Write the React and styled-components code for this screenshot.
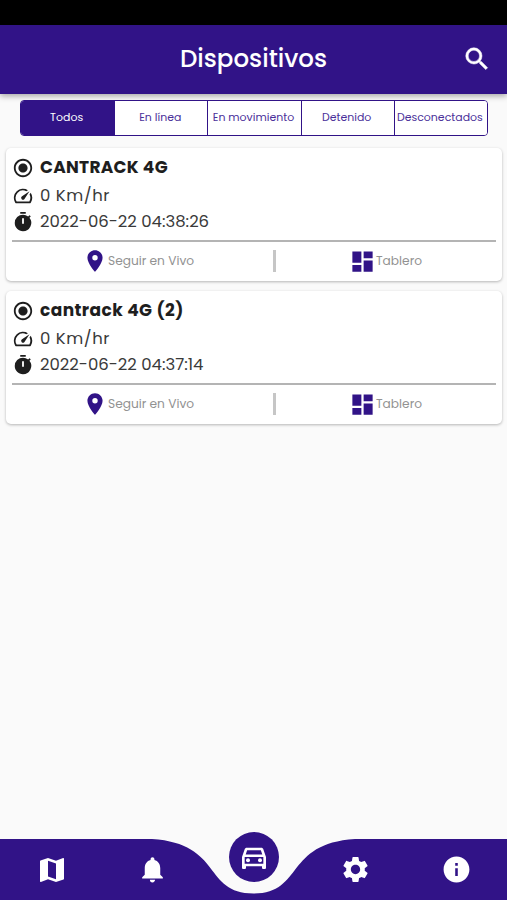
import React, { useState } from 'react';
import styled, { createGlobalStyle } from 'styled-components';
import {
  MdSearch,
  MdRadioButtonChecked,
  MdOutlineSpeed,
  MdTimer,
  MdPlace,
  MdDashboard,
  MdMap,
  MdNotifications,
  MdOutlineDirectionsCar,
  MdSettings,
  MdInfo
} from 'react-icons/md';

const primary = '#311387';

const filters = ['Todos', 'En línea', 'En movimiento', 'Detenido', 'Desconectados'];

const devices = [
  { name: 'CANTRACK 4G', speed: '0 Km/hr', time: '2022-06-22 04:38:26', tracking: 0.28 },
  { name: 'cantrack 4G (2)', speed: '0 Km/hr', time: '2022-06-22 04:37:14', tracking: 0.42 }
];

const GlobalStyle = createGlobalStyle`
  * {
    box-sizing: border-box;
  }
  body {
    margin: 0;
    background: #fafafa;
    font-family: Poppins, Inter, sans-serif;
  }
  svg {
    display: block;
    flex-shrink: 0;
  }
`;

const Screen = styled.div`
  display: flex;
  flex-direction: column;
  height: 900px;
  overflow: hidden;
  background: #fafafa;
`;

const StatusBar = styled.div`
  height: 25px;
  flex-shrink: 0;
  background: #000;
`;

const AppBar = styled.header`
  display: grid;
  grid-template-columns: 60px 1fr 60px;
  align-items: center;
  height: 69px;
  flex-shrink: 0;
  background: ${primary};
  color: #fff;
  box-shadow: 0 2px 6px rgba(0, 0, 0, 0.35);
`;

const Title = styled.h1`
  grid-column: 2;
  margin: 0;
  padding-bottom: 2px;
  text-align: center;
  font-size: 24.5px;
  line-height: 36px;
  font-weight: 500;
`;

const SearchButton = styled.button`
  display: flex;
  justify-content: center;
  padding: 0 0 1px;
  border: none;
  background: none;
  color: #fff;
  cursor: pointer;

  path:last-child {
    stroke: #fff;
    stroke-width: 0.4px;
  }
`;

const Filters = styled.div`
  display: grid;
  grid-template-columns: repeat(5, 1fr);
  height: 36px;
  margin: 6px 19px 0 20px;
  flex-shrink: 0;
  border: 1px solid ${primary};
  border-radius: 4px;
  background: #fff;
  overflow: hidden;
`;

const FilterButton = styled.button`
  min-width: 0;
  padding: 0 2px 0 0;
  border: none;
  border-left: ${({ $first }) => ($first ? 'none' : `1px solid ${primary}`)};
  background: ${({ $active }) => ($active ? primary : '#fff')};
  color: ${({ $active }) => ($active ? '#fff' : '#4a309a')};
  font-family: inherit;
  font-size: 10.95px;
  white-space: nowrap;
  cursor: pointer;
`;

const DeviceList = styled.main`
  display: flex;
  flex-direction: column;
  gap: 10px;
  flex: 1;
  padding: 12px 5px 0 6px;
`;

const Card = styled.article`
  height: 133px;
  padding: 6px 6px 0;
  border-radius: 5px;
  background: #fff;
  box-shadow: 0 1px 3px rgba(0, 0, 0, 0.28);
`;

const InfoRow = styled.div`
  display: flex;
  align-items: center;
  gap: 6px;
  height: ${({ $height }) => $height}px;
  color: #1e1e1e;
`;

const DeviceName = styled.span`
  padding-bottom: 2px;
  font-size: 17px;
  font-weight: 700;
  letter-spacing: ${({ $tracking }) => $tracking}px;
`;

const Detail = styled.span`
  padding-bottom: ${({ $lift }) => $lift || 0}px;
  font-size: 16.5px;
  color: #3a3a3a;
  letter-spacing: ${({ $tracking }) => $tracking}px;
`;

const Actions = styled.div`
  display: grid;
  grid-template-columns: 261px 3px 1fr;
  align-items: center;
  height: 40px;
  margin-top: 5px;
  border-top: 2px solid #b4b4b4;
`;

const Action = styled.button`
  display: flex;
  align-items: center;
  padding: 0 0 0 ${({ $indent }) => $indent}px;
  border: none;
  background: none;
  color: #929292;
  font-family: inherit;
  font-size: 12.2px;
  cursor: pointer;

  svg {
    color: ${primary};
  }
`;

const Separator = styled.span`
  height: 22px;
  background: #c6c6c6;
`;

const BottomNav = styled.nav`
  position: relative;
  height: 61px;
  flex-shrink: 0;
`;

const NavShape = styled.svg`
  position: absolute;
  top: 0;
  left: 0;
  fill: ${primary};
`;

const NavItems = styled.div`
  position: relative;
  display: grid;
  grid-template-columns: repeat(5, 1fr);
  justify-items: center;
  align-items: center;
  height: 61px;
  padding-left: 1px;
  color: #fff;
`;

const ActiveItem = styled.div`
  position: absolute;
  top: -7px;
  left: 229px;
  display: flex;
  align-items: center;
  justify-content: center;
  width: 50px;
  height: 50px;
  border-radius: 50%;
  background: ${primary};
  color: #fff;
`;

const DeviceCard = ({ device }) => (
  <Card>
    <InfoRow $height={28}>
      <MdRadioButtonChecked size={22} />
      <DeviceName $tracking={device.tracking}>{device.name}</DeviceName>
    </InfoRow>
    <InfoRow $height={27}>
      <MdOutlineSpeed size={22} />
      <Detail $tracking={0.55}>{device.speed}</Detail>
    </InfoRow>
    <InfoRow $height={26}>
      <MdTimer size={22} />
      <Detail $tracking={0} $lift={2}>{device.time}</Detail>
    </InfoRow>
    <Actions>
      <Action $indent={70}>
        <MdPlace size={26} />
        Seguir en Vivo
      </Action>
      <Separator />
      <Action $indent={73}>
        <MdDashboard size={27} />
        Tablero
      </Action>
    </Actions>
  </Card>
);

const App = () => {
  const [active, setActive] = useState('Todos');

  return (
    <Screen>
      <GlobalStyle />
      <StatusBar />
      <AppBar>
        <Title>Dispositivos</Title>
        <SearchButton aria-label="Buscar">
          <MdSearch size={30} />
        </SearchButton>
      </AppBar>
      <Filters>
        {filters.map((filter, index) => (
          <FilterButton
            key={filter}
            $first={index === 0}
            $active={filter === active}
            onClick={() => setActive(filter)}
          >
            {filter}
          </FilterButton>
        ))}
      </Filters>
      <DeviceList>
        {devices.map((device) => (
          <DeviceCard key={device.name} device={device} />
        ))}
      </DeviceList>
      <BottomNav>
        {/* bar with the dip under the active item */}
        <NavShape width="507" height="61" viewBox="0 0 507 61">
          <path d="M0 0H152C223 4.5 203 54.5 253.5 54.5C304 54.5 284 4.5 355 0H507V61H0Z" />
        </NavShape>
        <NavItems>
          <MdMap size={32} />
          <MdNotifications size={31} />
          <span />
          <MdSettings size={31} />
          <MdInfo size={31} />
        </NavItems>
        <ActiveItem>
          <MdOutlineDirectionsCar size={32} />
        </ActiveItem>
      </BottomNav>
    </Screen>
  );
};

export default App;
